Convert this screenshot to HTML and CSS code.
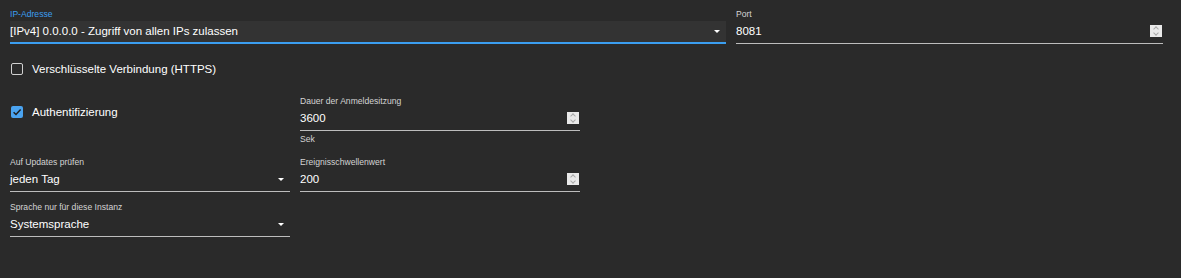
FILE: index.html
```html
<!DOCTYPE html>
<html lang="de">
<head>
    <meta charset="UTF-8">
    <meta name="viewport" content="width=device-width, initial-scale=1.0">
    <title>Instanz Einstellungen</title>
    <link rel="stylesheet" href="styles.css">
</head>
<body>
    <div class="settings">

        <div class="row-top">
            <div class="field">
                <div class="field-label focused">IP-Adresse</div>
                <div class="field-input select filled focused">
                    <span>[IPv4] 0.0.0.0 - Zugriff von allen IPs zulassen</span>
                    <span class="arrow"></span>
                </div>
            </div>
            <div class="field">
                <div class="field-label">Port</div>
                <div class="field-input">
                    <span>8081</span>
                    <span class="spin"><i class="up"></i><i class="down"></i></span>
                </div>
            </div>
        </div>

        <div class="check check-https">
            <span class="box"></span>
            <span>Verschlüsselte Verbindung (HTTPS)</span>
        </div>

        <div class="row row-auth">
            <div class="check check-auth">
                <span class="box checked">
                    <svg width="12" height="12" viewBox="0 0 12 12"><path d="M2.6 6.2 L5 8.5 L9.6 3.6" fill="none" stroke="#1e1e1e" stroke-width="1.5"/></svg>
                </span>
                <span>Authentifizierung</span>
            </div>
            <div class="field">
                <div class="field-label">Dauer der Anmeldesitzung</div>
                <div class="field-input">
                    <span>3600</span>
                    <span class="spin"><i class="up"></i><i class="down"></i></span>
                </div>
                <div class="field-help">Sek</div>
            </div>
        </div>

        <div class="row row-updates">
            <div class="field">
                <div class="field-label">Auf Updates prüfen</div>
                <div class="field-input select">
                    <span>jeden Tag</span>
                    <span class="arrow"></span>
                </div>
            </div>
            <div class="field">
                <div class="field-label">Ereignisschwellenwert</div>
                <div class="field-input">
                    <span>200</span>
                    <span class="spin"><i class="up"></i><i class="down"></i></span>
                </div>
            </div>
        </div>

        <div class="row row-lang">
            <div class="field">
                <div class="field-label">Sprache nur für diese Instanz</div>
                <div class="field-input select">
                    <span>Systemsprache</span>
                    <span class="arrow"></span>
                </div>
            </div>
        </div>

    </div>
</body>
</html>
```

FILE: styles.css
```css
body {
    margin: 0;
    background-color: #2a2a2a;
    color: #ffffff;
    font-family: "Liberation Sans", Arial, sans-serif;
}

.settings {
    padding: 9px 18px 0 10px;
}

.row-top {
    display: grid;
    grid-template-columns: 716px 427px;
    column-gap: 10px;
}

.row {
    display: grid;
    grid-template-columns: 280px 280px;
    column-gap: 10px;
    align-items: start;
}

.field-label {
    font-size: 8.6px;
    line-height: 10px;
    color: #d4d4d4;
}

.field-label.focused {
    color: #3b9ef0;
}

.field-input {
    display: flex;
    align-items: center;
    justify-content: space-between;
    height: 20px;
    margin-top: 2px;
    padding-bottom: 2px;
    border-bottom: 1px solid #bdbdbd;
    font-size: 11.5px;
    line-height: 20px;
}

.field-input.filled {
    background-color: #333333;
    margin-right: 0;
}

.field-input.focused {
    border-bottom: 2px solid #3b9ef0;
    padding-bottom: 1px;
}

.field-help {
    margin-top: 3px;
    font-size: 8.6px;
    line-height: 10px;
    color: #d4d4d4;
}

.arrow {
    width: 0;
    height: 0;
    margin-right: 6px;
    border-left: 3.5px solid transparent;
    border-right: 3.5px solid transparent;
    border-top: 3.5px solid #ffffff;
}

.spin {
    display: flex;
    flex-direction: column;
    align-items: center;
    justify-content: center;
    gap: 2px;
    width: 12px;
    height: 12px;
    margin-right: 1px;
    background-color: #e9e9e9;
}

.spin i {
    display: block;
    width: 3px;
    height: 3px;
    border-left: 1px solid #a8a8a8;
    border-top: 1px solid #a8a8a8;
}

.spin .up {
    transform: translateY(1px) rotate(45deg);
}

.spin .down {
    transform: translateY(-1px) rotate(225deg);
}

.check {
    display: flex;
    align-items: center;
    gap: 9px;
    height: 24px;
    padding-left: 1px;
    font-size: 11.5px;
}

.check-https {
    margin-top: 13px;
}

.box {
    box-sizing: border-box;
    width: 12px;
    height: 12px;
    border: 1.5px solid #d0d0d0;
    border-radius: 2px;
}

.box.checked {
    border: none;
    background-color: #4aa3f0;
}

.box svg {
    display: block;
}

.row-auth {
    margin-top: 15px;
}

.check-auth {
    margin-top: 4px;
}

.row-updates {
    margin-top: 13px;
}

.row-lang {
    margin-top: 10px;
}
```
